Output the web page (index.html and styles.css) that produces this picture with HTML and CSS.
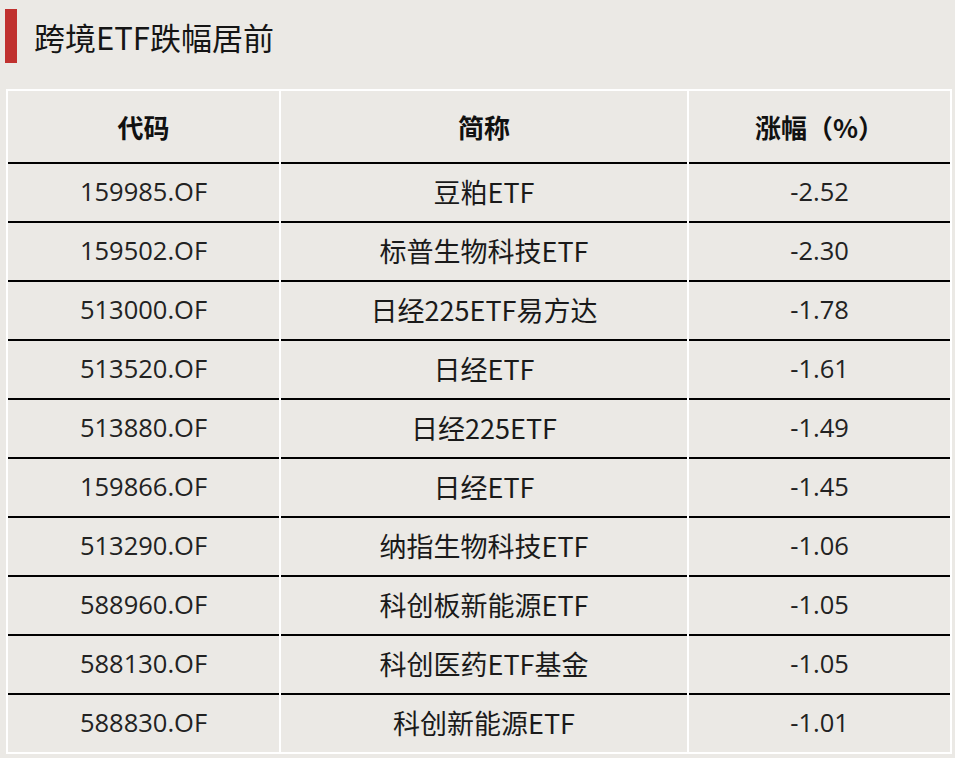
FILE: index.html
```html
<!DOCTYPE html>
<html lang="zh-CN">
<head>
<meta charset="utf-8">
<title>跨境ETF跌幅居前</title>
<link rel="stylesheet" href="styles.css">
</head>
<body>
<div class="page">
  <div class="title-row">
    <div class="title-bar"></div>
    <h1 class="title">跨境ETF跌幅居前</h1>
  </div>
  <div class="table">
    <div class="cell head">代码</div>
    <div class="cell head">简称</div>
    <div class="cell head">涨幅（%）</div>

    <div class="cell">159985.OF</div><div class="cell name">豆粕ETF</div><div class="cell">-2.52</div>
    <div class="cell">159502.OF</div><div class="cell name">标普生物科技ETF</div><div class="cell">-2.30</div>
    <div class="cell">513000.OF</div><div class="cell name">日经225ETF易方达</div><div class="cell">-1.78</div>
    <div class="cell">513520.OF</div><div class="cell name">日经ETF</div><div class="cell">-1.61</div>
    <div class="cell">513880.OF</div><div class="cell name">日经225ETF</div><div class="cell">-1.49</div>
    <div class="cell">159866.OF</div><div class="cell name">日经ETF</div><div class="cell">-1.45</div>
    <div class="cell">513290.OF</div><div class="cell name">纳指生物科技ETF</div><div class="cell">-1.06</div>
    <div class="cell">588960.OF</div><div class="cell name">科创板新能源ETF</div><div class="cell">-1.05</div>
    <div class="cell">588130.OF</div><div class="cell name">科创医药ETF基金</div><div class="cell">-1.05</div>
    <div class="cell">588830.OF</div><div class="cell name">科创新能源ETF</div><div class="cell">-1.01</div>
  </div>
</div>
</body>
</html>
```
FILE: styles.css
```css
html, body {
  margin: 0;
  padding: 0;
  background: #ebe9e5;
}
body {
  font-family: "Open Sans", "Noto Sans CJK SC", sans-serif;
  color: #1e1e1e;
}
.page {
  width: 955px;
  height: 758px;
  padding-top: 9px;
  box-sizing: border-box;
}
.title-row {
  display: flex;
  align-items: center;
  height: 54px;
  padding-left: 5px;
}
.title-bar {
  width: 12px;
  height: 54px;
  background: #c0312f;
}
.title {
  margin: 0 0 0 17px;
  font-family: "Noto Sans CJK SC", sans-serif;
  font-weight: 400;
  font-size: 31px;
  line-height: 1;
  color: #151515;
}
.table {
  margin: 26px 0 0 6px;
  width: 946px;
  box-sizing: border-box;
  border: 2px solid #ffffff;
  background: #ffffff;
  display: grid;
  grid-template-columns: 271px 406px 261px;
  grid-template-rows: 71px repeat(10, 59px);
  column-gap: 2px;
}
.cell {
  background: #ebe9e5;
  display: flex;
  align-items: center;
  justify-content: center;
  font-size: 25.5px;
  font-weight: 400;
  color: #222222;
  box-sizing: border-box;
  border-top: 2px solid #000000;
  padding-bottom: 3px;
}
.cell.name {
  font-family: "Noto Sans CJK SC", sans-serif;
  font-weight: 400;
  font-size: 27px;
  color: #1a1a1a;
  padding-bottom: 2px;
}
.cell.head {
  border-top: none;
  font-family: "Noto Sans CJK SC", sans-serif;
  font-weight: 700;
  font-size: 26px;
  color: #111111;
  padding-bottom: 0;
}
```
